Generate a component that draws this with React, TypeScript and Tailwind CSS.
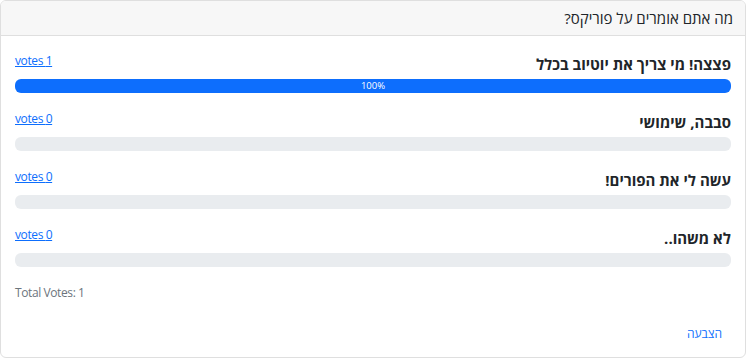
import React from "react";

type Option = { label: string; votes: number };

const options: Option[] = [
    { label: "פצצה! מי צריך את יוטיוב בכלל", votes: 1 },
    { label: "סבבה, שימושי", votes: 0 },
    { label: "עשה לי את הפורים!", votes: 0 },
    { label: "לא משהו..", votes: 0 },
];

const total = options.reduce((s, o) => s + o.votes, 0);

export default function App() {
    return (
        <div
            className="w-[748px] h-[360px] bg-white"
            style={{ fontFamily: '"Open Sans", "Liberation Sans", sans-serif' }}
        >
            <div
                dir="rtl"
                className="w-[746px] h-[358px] border border-[#dfdfdf] rounded-md overflow-hidden flex flex-col"
            >
                <div className="h-[35px] bg-[#f7f7f7] border-b border-[#dfdfdf] flex items-center pr-[12px] pl-[14px] pt-[1px] text-[15px] text-[#212529]">
                    מה אתם אומרים על פוריקס?
                </div>

                <div className="px-[14px] pt-[18px] flex flex-col">
                    {options.map((o) => {
                        const pct = total ? Math.round((o.votes / total) * 100) : 0;
                        return (
                            <div key={o.label} className="mb-[19px]">
                                <div className="flex justify-between items-start h-[20px]">
                                    <span className="text-[15px] leading-[20px] font-bold text-[#212529]">
                                        {o.label}
                                    </span>
                                    <a
                                        href="#"
                                        dir="ltr"
                                        className="text-[12px] leading-[16px] tracking-[-0.4px] -mt-[1px] text-[#0d6efd] underline"
                                    >
                                        votes {o.votes}
                                    </a>
                                </div>
                                <div className="mt-[5px] h-[14px] rounded-md bg-[#e9ecef] overflow-hidden flex">
                                    {pct > 0 ? (
                                        <div
                                            className="h-full bg-[#0d6efd] text-white text-[9.5px] leading-[14px] text-center"
                                            style={{ width: `${pct}%` }}
                                        >
                                            {pct}%
                                        </div>
                                    ) : null}
                                </div>
                            </div>
                        );
                    })}

                    <div dir="ltr" className="-mt-[1px] text-[12px] leading-[16px] tracking-[-0.4px] text-[#6c757d] text-left">
                        Total Votes: {total}
                    </div>

                    <div className="mt-[25px] flex">
                        <button type="button" className="mr-[9px] text-[12px] leading-[16px] text-[#0d6efd]">
                            הצבעה
                        </button>
                    </div>
                </div>
            </div>
        </div>
    );
}
